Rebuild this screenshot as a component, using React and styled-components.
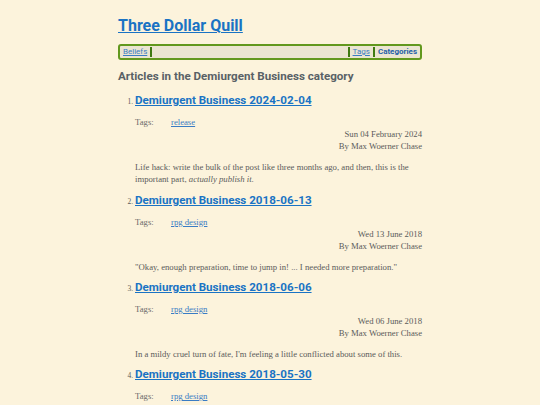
import styled, { createGlobalStyle } from "styled-components";

const GlobalStyle = createGlobalStyle`
  body {
    margin: 0;
    background: #fcf3dc;
    font-family: "Liberation Serif", "DejaVu Serif", serif;
    color: #5b5b5b;
  }
`;

const articles = [
  {
    title: "Demiurgent Business 2024-02-04",
    tag: "release",
    date: "Sun 04 February 2024",
    summary: (
      <>
        Life hack: write the bulk of the post like three months ago, and then,
        this is the important part, <em>actually publish it</em>.
      </>
    ),
  },
  {
    title: "Demiurgent Business 2018-06-13",
    tag: "rpg design",
    date: "Wed 13 June 2018",
    summary: "\"Okay, enough preparation, time to jump in! ... I needed more preparation.\"",
  },
  {
    title: "Demiurgent Business 2018-06-06",
    tag: "rpg design",
    date: "Wed 06 June 2018",
    summary: "In a mildy cruel turn of fate, I'm feeling a little conflicted about some of this.",
  },
  {
    title: "Demiurgent Business 2018-05-30",
    tag: "rpg design",
    date: "Wed 30 May 2018",
    summary: "",
  },
];

const App = () => {
  return (
    <>
      <GlobalStyle />
      <S.Page>
        <S.SiteTitle href="#">Three Dollar Quill</S.SiteTitle>
        <S.Nav>
          <S.NavLink href="#">Beliefs</S.NavLink>
          <S.Sep />
          <S.Spacer />
          <S.Sep />
          <S.NavLink href="#">Tags</S.NavLink>
          <S.Sep />
          <S.NavLink href="#" $current>
            Categories
          </S.NavLink>
        </S.Nav>
        <S.Heading>Articles in the Demiurgent Business category</S.Heading>
        <S.List>
          {articles.map((a) => (
            <S.Item key={a.title}>
              <S.ItemTitle href="#">{a.title}</S.ItemTitle>
              <S.TagRow>
                <S.TagLabel>Tags:</S.TagLabel>
                <S.TagLink href="#">{a.tag}</S.TagLink>
              </S.TagRow>
              <S.Meta>
                <div>{a.date}</div>
                <div>By Max Woerner Chase</div>
              </S.Meta>
              {a.summary && <S.Summary>{a.summary}</S.Summary>}
            </S.Item>
          ))}
        </S.List>
      </S.Page>
    </>
  );
};

export default App;

const Page = styled.div`
  width: 304px;
  margin: 0 auto;
  padding-top: 14px;
`;

const SiteTitle = styled.a`
  display: inline-block;
  font-family: Roboto, "Liberation Sans", sans-serif;
  font-weight: 700;
  font-size: 16px;
  line-height: 24px;
  color: #1a73c4;
  text-decoration: underline;
`;

const Nav = styled.nav`
  display: flex;
  align-items: center;
  height: 12px;
  margin-top: 6px;
  padding: 0 2px;
  border: 2px solid #62981e;
  border-radius: 3px;
  background: #ebe5d1;
`;

const NavLink = styled.a`
  font-family: Roboto, "Liberation Sans", sans-serif;
  font-size: 8px;
  line-height: 12px;
  padding: 0 1px;
  color: ${({ $current }) => ($current ? "#1f5fa8" : "#3a7cc4")};
  font-weight: ${({ $current }) => ($current ? 700 : 400)};
  text-decoration: ${({ $current }) => ($current ? "none" : "underline")};
`;

const Sep = styled.span`
  width: 2px;
  height: 10px;
  margin: 0 2px;
  background: #3f7a12;
`;

const Spacer = styled.span`
  flex: 1;
`;

const Heading = styled.h2`
  margin: 7px 0 0;
  font-family: Roboto, "Liberation Sans", sans-serif;
  font-size: 11.6px;
  line-height: 18px;
  font-weight: 700;
  color: #596166;
`;

const List = styled.ol`
  margin: 6px 0 0;
  padding-left: 17px;
  font-size: 7px;
`;

const Item = styled.li`
  margin-bottom: 5px;
  &::marker {
    font-size: 7.5px;
    color: #5b5b5b;
  }
`;

const ItemTitle = styled.a`
  font-family: Roboto, "Liberation Sans", sans-serif;
  font-size: 11.6px;
  line-height: 18px;
  font-weight: 700;
  color: #1a73c4;
`;

const TagRow = styled.div`
  display: flex;
  margin-top: 7px;
  font-size: 8.7px;
  line-height: 12px;
`;

const TagLabel = styled.span`
  width: 36px;
  color: #6a6a6a;
`;

const TagLink = styled.a`
  color: #3a7cc4;
`;

const Meta = styled.div`
  text-align: right;
  font-size: 8.7px;
  line-height: 12px;
  color: #5b5b5b;
`;

const Summary = styled.p`
  margin: 8.75px 0 0;
  font-size: 8.7px;
  line-height: 12.5px;
  color: #5b5b5b;
`;

const S = {
  Page,
  SiteTitle,
  Nav,
  NavLink,
  Sep,
  Spacer,
  Heading,
  List,
  Item,
  ItemTitle,
  TagRow,
  TagLabel,
  TagLink,
  Meta,
  Summary,
};
